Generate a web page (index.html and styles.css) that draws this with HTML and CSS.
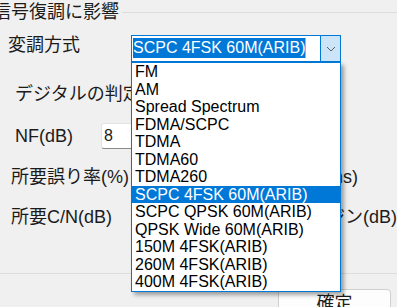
FILE: index.html
```html
<!DOCTYPE html>
<html lang="ja">
<head>
    <meta charset="UTF-8">
    <title>信号復調に影響</title>
    <link rel="stylesheet" href="styles.css">
</head>
<body>
    <div class="group-title">
        <span class="group-name">信号復調に影響</span>
        <span class="rule"></span>
    </div>
    <div class="row row-mode">
        <span class="label label-mode">変調方式</span>
        <div class="combo">
            <span class="combo-text"><span class="combo-sel">SCPC 4FSK 60M(ARIB)</span><span class="caret"></span></span>
            <span class="combo-btn">
                <svg width="10" height="6" viewBox="0 0 10 6"><polyline points="1,1 5,5 9,1" fill="none" stroke="#5f5f5f" stroke-width="1"/></svg>
            </span>
            <ul class="combo-list">
                <li>FM</li>
                <li>AM</li>
                <li>Spread Spectrum</li>
                <li>FDMA/SCPC</li>
                <li>TDMA</li>
                <li>TDMA60</li>
                <li>TDMA260</li>
                <li class="selected">SCPC 4FSK 60M(ARIB)</li>
                <li>SCPC QPSK 60M(ARIB)</li>
                <li>QPSK Wide 60M(ARIB)</li>
                <li>150M 4FSK(ARIB)</li>
                <li>260M 4FSK(ARIB)</li>
                <li>400M 4FSK(ARIB)</li>
            </ul>
        </div>
    </div>
    <div class="row row-sub row-judge">
        <span class="label">デジタルの判定基準</span>
    </div>
    <div class="row row-sub row-nf">
        <span class="label label-nf">NF(dB)</span>
        <span class="textbox">8</span>
    </div>
    <div class="row row-wide row-ber">
        <span class="label label-wide">所要誤り率(%)</span>
        <span class="label">遅延(ms)</span>
    </div>
    <div class="row row-wide row-cn">
        <span class="label label-wide">所要C/N(dB)</span>
        <span class="label">回線マージン(dB)</span>
    </div>
    <div class="bottom-rule"></div>
    <div class="actions">
        <button type="button" class="btn">確定</button>
    </div>
</body>
</html>
```

FILE: styles.css
```css
body {
    margin: 0;
    width: 397px;
    height: 307px;
    overflow: hidden;
    background: #f0f0f0;
    color: #1b1b1b;
    font-family: "Liberation Sans", "Noto Sans CJK JP", sans-serif;
}
.group-title {
    display: flex;
    align-items: center;
    height: 24px;
}
.group-name {
    font-size: 18px;
    line-height: 24px;
    margin-left: -7px;
    white-space: nowrap;
}
.rule {
    flex: 1;
    height: 1px;
    background: #dcdcdc;
    margin-left: 3px;
}
.row {
    display: flex;
    align-items: center;
}
.label {
    font-size: 18px;
    line-height: 20px;
    white-space: nowrap;
}
.row-mode {
    margin-top: 11px;
    height: 27px;
    padding-left: 8px;
    align-items: flex-start;
}
.label-mode {
    width: 123px;
}
.combo {
    position: relative;
    display: flex;
    width: 208px;
    height: 25px;
    border: 1px solid #0078d7;
    background: #fff;
}
.combo-text {
    flex: 1;
    padding: 2px 0 0 1px;
}
.combo-sel {
    display: inline-block;
    vertical-align: top;
    background: #0078d7;
    color: #fff;
    font-size: 16px;
    line-height: 20px;
}
.caret {
    display: inline-block;
    vertical-align: top;
    width: 1px;
    height: 20px;
    background: #f29d4b;
}
.combo-btn {
    width: 19px;
    border-left: 1px solid #0078d7;
    background: #cce4f7;
    display: flex;
    align-items: center;
    justify-content: center;
}
.combo-list {
    position: absolute;
    top: 26px;
    left: -1px;
    z-index: 2;
    width: 208px;
    margin: 0;
    padding: 0;
    list-style: none;
    background: #fff;
    border: 1px solid #0078d7;
    box-shadow: 3px 3px 4px rgba(0, 0, 0, 0.35);
}
.combo-list li {
    font-size: 16px;
    line-height: 17.5px;
    padding-left: 3px;
    color: #000;
    white-space: nowrap;
}
.combo-list li.selected {
    background: #0078d7;
    color: #fff;
}
.row-sub {
    padding-left: 15px;
}
.row-judge {
    margin-top: 18px;
    height: 27px;
}
.row-nf {
    margin-top: 16px;
    height: 26px;
}
.label-nf {
    width: 86px;
}
.textbox {
    box-sizing: border-box;
    width: 60px;
    height: 26px;
    padding-left: 2px;
    background: #fff;
    border: 1px solid #e3e3e3;
    border-bottom-color: #8a8a8a;
    border-radius: 3px;
    font-size: 16px;
    line-height: 24px;
}
.row-wide {
    padding-left: 11px;
    height: 26px;
}
.label-wide {
    width: 275px;
}
.row-ber {
    margin-top: 15px;
}
.row-cn {
    margin-top: 14px;
}
.bottom-rule {
    height: 1px;
    background: #dcdcdc;
    margin-top: 43px;
}
.actions {
    display: flex;
    justify-content: flex-end;
    padding-right: 6px;
    margin-top: 15px;
}
.btn {
    width: 113px;
    height: 30px;
    padding: 0;
    border: 1px solid #d0d0d0;
    border-radius: 4px;
    background: #fdfdfd;
    color: #1b1b1b;
    font-family: "Liberation Sans", "Noto Sans CJK JP", sans-serif;
    font-size: 18px;
    line-height: 24px;
    display: flex;
    justify-content: center;
    align-items: flex-start;
    padding-top: 1px;
}
```
